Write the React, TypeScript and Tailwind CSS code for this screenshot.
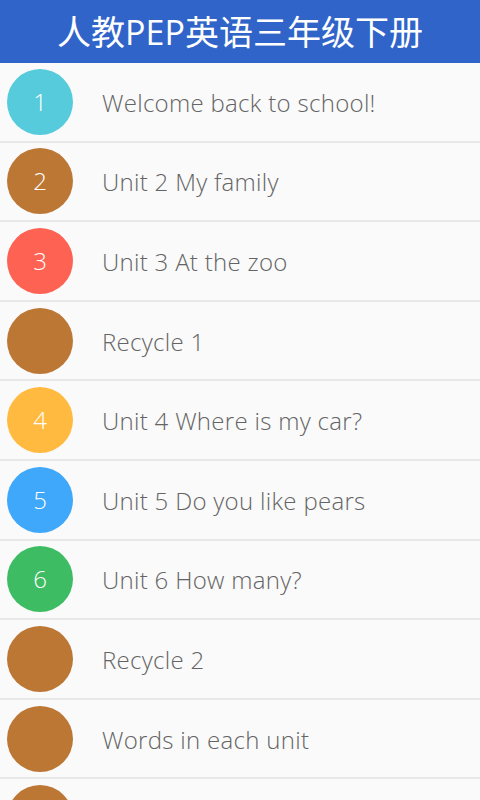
import React from "react";

interface LessonProps {
  label: string;
  title: string;
  color: string;
}

const lessons: LessonProps[] = [
  { label: "1", title: "Welcome back to school!", color: "bg-[#55cbdc]" },
  { label: "2", title: "Unit 2 My family", color: "bg-[#bc7735]" },
  { label: "3", title: "Unit 3 At the zoo", color: "bg-[#fd6253]" },
  { label: "", title: "Recycle 1", color: "bg-[#bc7735]" },
  { label: "4", title: "Unit 4 Where is my car?", color: "bg-[#ffba3f]" },
  { label: "5", title: "Unit 5 Do you like pears", color: "bg-[#3fa8fa]" },
  { label: "6", title: "Unit 6 How many?", color: "bg-[#3dbc64]" },
  { label: "", title: "Recycle 2", color: "bg-[#bc7735]" },
  { label: "", title: "Words in each unit", color: "bg-[#bc7735]" },
  { label: "", title: "", color: "bg-[#bc7735]" },
];

function LessonRow({ label, title, color }: LessonProps) {
  return (
    <div className="flex items-center h-[79.6px] shrink-0 border-b-2 border-[#e8e8e8] bg-[#fafafa]">
      <div
        className={`ml-[7px] w-[66px] h-[66px] rounded-full flex items-center justify-center text-white text-[24px] font-[350] ${color}`}
      >
        {label}
      </div>
      <span className="ml-[29px] mt-[2px] text-[24px] font-[350] tracking-[0.3px] text-[#646464]">
        {title}
      </span>
    </div>
  );
}

export default function App() {
  return (
    <div
      className="w-[480px] h-[800px] overflow-hidden flex flex-col bg-[#fafafa]"
      style={{ fontFamily: '"Open Sans", "Noto Sans CJK SC", sans-serif' }}
    >
      {/* Title bar */}
      <div className="h-[63px] shrink-0 bg-[#3064c9] flex items-center justify-center">
        <h1 className="text-white text-[34px] leading-none">人教PEP英语三年级下册</h1>
      </div>

      {/* Lessons */}
      <div className="flex flex-col">
        {lessons.map((l, i) => (
          <LessonRow key={i} {...l} />
        ))}
      </div>
    </div>
  );
}
